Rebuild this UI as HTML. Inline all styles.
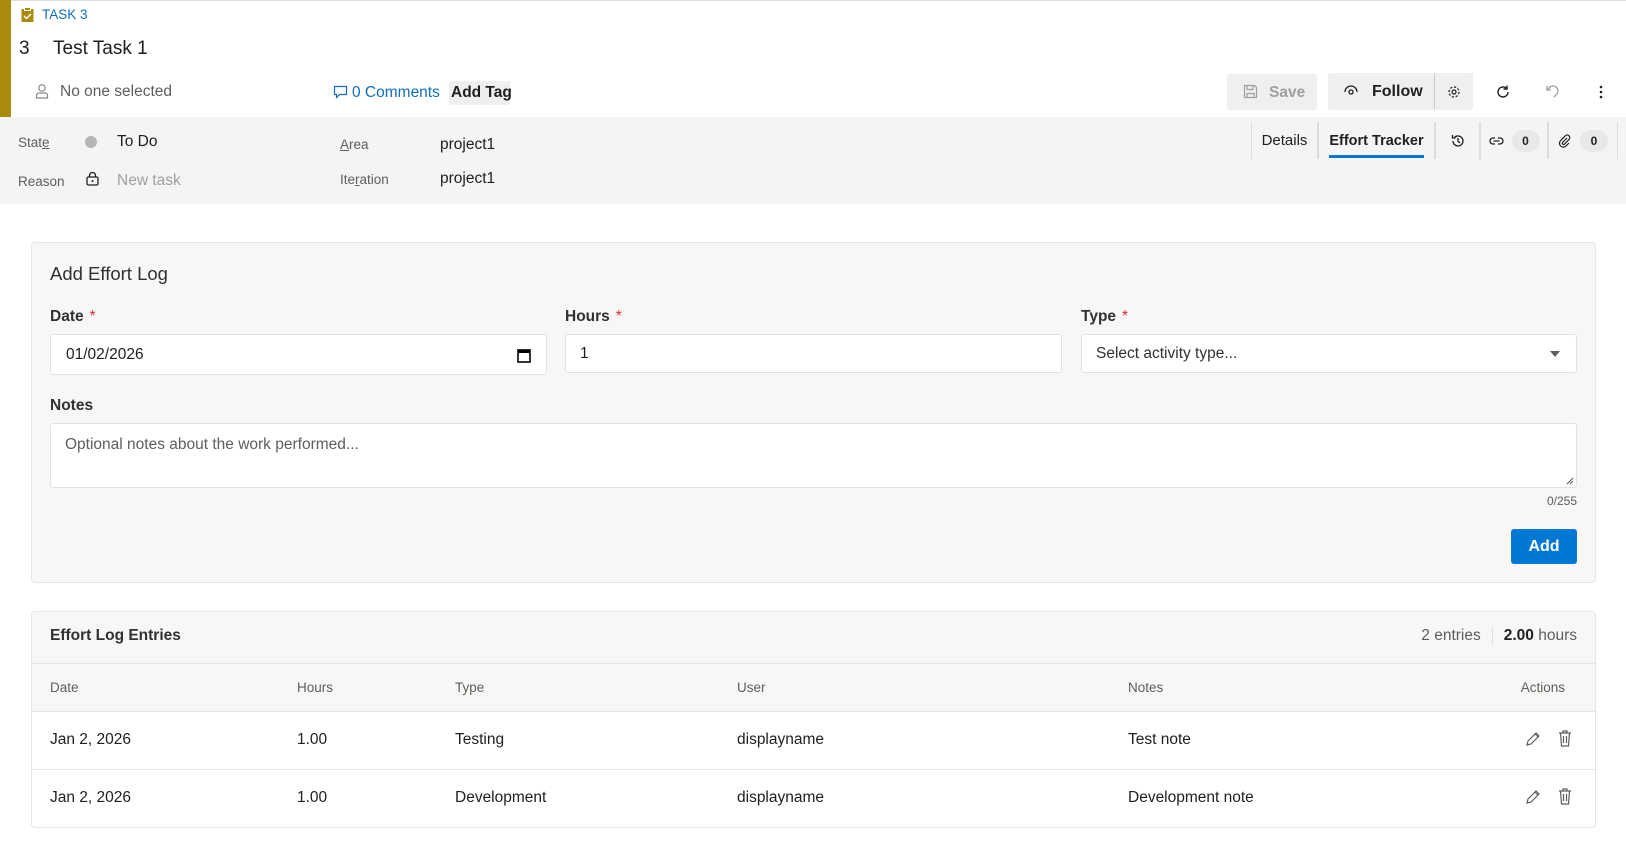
<!DOCTYPE html>
<html><head><meta charset="utf-8"><style>
*{box-sizing:border-box;margin:0;padding:0}
body{width:1626px;height:867px;overflow:hidden;background:#fff;font-family:"Liberation Sans",sans-serif;color:#201f1e;position:relative}
.a{position:absolute;white-space:nowrap}
.bar{position:absolute;left:0;top:0;width:11px;height:117px;background:#a88b0b}
.grey{position:absolute;left:0;top:117px;width:1626px;height:87px;background:#f4f4f4}
.lbl{font-size:13.5px;color:#605e5c}
.val{font-size:15.5px;color:#201f1e}
.btn{position:absolute;background:#efefef;border-radius:2px}
.tab{position:absolute;top:122px;height:37px;border-left:1px solid #dcdcdc;border-right:1px solid #dcdcdc;font-size:15px;display:flex;align-items:center;justify-content:center}
.card{position:absolute;left:31px;width:1565px;background:#f8f7f6;border:1px solid #e6e6e6;border-radius:4px}
.flbl{font-size:15.5px;font-weight:bold;color:#323130}
.star{color:#d13438;font-weight:normal;margin-left:6px}
.inp{position:absolute;height:40px;background:#fff;border:1px solid #e1e1e1;border-radius:3px;font-size:15.5px;display:flex;align-items:center;padding-left:14px}
.th{font-size:13.5px;color:#605e5c}
.td{font-size:15.5px}
.badge{display:inline-block;background:#e8e8e8;border-radius:12px;width:28px;height:22px;font-size:12px;line-height:22px;text-align:center;font-weight:bold}
</style></head><body>
<div style="position:absolute;left:0;top:0;width:1626px;height:1px;background:#e0e0e0"></div>
<div class="bar"></div>
<svg class="a" style="left:21px;top:7px" width="13" height="15" viewBox="0 0 13 15"><rect x="0.5" y="2" width="12" height="13" fill="#a88b0b"/><rect x="3.5" y="0.5" width="6" height="3" fill="#a88b0b" stroke="#fff" stroke-width="1"/><path d="M3 9l2.5 2.5L10 7" stroke="#fff" stroke-width="1.5" fill="none"/></svg>
<div class="a" style="left:42px;top:7px;font-size:13.5px;color:#106ebe">TASK 3</div>
<div class="a" style="left:19px;top:38px;font-size:19px">3</div>
<div class="a" style="left:53px;top:38px;font-size:19px">Test Task 1</div>
<svg class="a" style="left:35px;top:83px" width="14" height="16" viewBox="0 0 14 16"><circle cx="7" cy="5" r="3.2" fill="none" stroke="#8a8886" stroke-width="1.2"/><path d="M1.5 15v-2.5a2.5 2.5 0 0 1 2.5-2.5h6a2.5 2.5 0 0 1 2.5 2.5V15z" fill="none" stroke="#8a8886" stroke-width="1.2"/></svg>
<div class="a" style="left:60px;top:83px;font-size:15.5px;color:#605e5c">No one selected</div>
<svg class="a" style="left:333px;top:85px" width="15" height="15" viewBox="0 0 15 15"><path d="M1.5 1.5h12v8h-7l-3 3v-3h-2z" fill="none" stroke="#106ebe" stroke-width="1.2"/></svg>
<div class="a" style="left:352px;top:84px;font-size:15.5px;color:#106ebe">0 Comments</div>
<div class="a" style="left:449px;top:81px;width:61px;height:24px;background:#efefef;border-radius:2px;font-size:15.5px;font-weight:bold;padding:3px 2px">Add Tag</div>

<div class="btn" style="left:1227px;top:74px;width:90px;height:36px"></div>
<svg class="a" style="left:1243px;top:84px" width="15" height="15" viewBox="0 0 15 15"><path d="M1.5 1.5h10l2 2v10h-12z M4 1.5v4h6v-4 M4 13.5v-4h7v4" fill="none" stroke="#a19f9d" stroke-width="1.2"/></svg>
<div class="a" style="left:1269px;top:84px;font-size:15.5px;font-weight:bold;color:#a19f9d">Save</div>
<div class="btn" style="left:1328px;top:73px;width:106px;height:37px"></div>
<div class="a" style="left:1434px;top:73px;width:1px;height:37px;background:#ccc"></div>
<div class="btn" style="left:1435px;top:73px;width:38px;height:37px"></div>
<svg class="a" style="left:1344px;top:85px" width="14" height="10" viewBox="0 0 14 10"><path d="M1 7a6 6 0 0 1 12 0" fill="none" stroke="#201f1e" stroke-width="1.3"/><circle cx="7" cy="7" r="2" fill="none" stroke="#201f1e" stroke-width="1.3"/></svg>
<div class="a" style="left:1372px;top:83px;font-size:16px;font-weight:bold">Follow</div>
<svg class="a" style="left:1447px;top:85px" width="14" height="14" viewBox="0 0 14 14"><circle cx="7" cy="7" r="2" fill="none" stroke="#201f1e" stroke-width="1.2"/><circle cx="7" cy="7" r="5" fill="none" stroke="#201f1e" stroke-width="1.2" stroke-dasharray="2.2 1.7"/></svg>
<svg class="a" style="left:1495px;top:84px" width="16" height="16" viewBox="0 0 16 16"><path d="M13 8a5 5 0 1 1-1.5-3.6" fill="none" stroke="#201f1e" stroke-width="1.4"/><path d="M12 1.5v3.5h-3.5" fill="none" stroke="#201f1e" stroke-width="1.4"/></svg>
<svg class="a" style="left:1545px;top:84px" width="16" height="16" viewBox="0 0 16 16"><path d="M2 2v4h4 M2 6l3-3a5 5 0 0 1 7 7l-3 3" fill="none" stroke="#a19f9d" stroke-width="1.3"/></svg>
<svg class="a" style="left:1598px;top:84px" width="6" height="16" viewBox="0 0 6 16"><circle cx="3" cy="3" r="1.3" fill="#201f1e"/><circle cx="3" cy="8" r="1.3" fill="#201f1e"/><circle cx="3" cy="13" r="1.3" fill="#201f1e"/></svg>

<div class="grey"></div>
<div class="a lbl" style="left:18px;top:135px">Stat<u>e</u></div>
<div class="a" style="left:85px;top:136px;width:12px;height:12px;border-radius:50%;background:#b5b5b5"></div>
<div class="a val" style="left:117px;top:133px">To Do</div>
<div class="a lbl" style="left:18px;top:174px">Reason</div>
<svg class="a" style="left:86px;top:172px" width="13" height="14" viewBox="0 0 13 14"><rect x="1" y="5" width="11" height="8" rx="1.5" fill="none" stroke="#201f1e" stroke-width="1.3"/><path d="M3.5 5V3.5a3 3 0 0 1 6 0V5" fill="none" stroke="#201f1e" stroke-width="1.3"/><circle cx="6.5" cy="9" r="1" fill="#201f1e"/></svg>
<div class="a val" style="left:117px;top:172px;color:#a19f9d">New task</div>
<div class="a lbl" style="left:340px;top:137px"><u>A</u>rea</div>
<div class="a val" style="left:440px;top:136px">project1</div>
<div class="a lbl" style="left:340px;top:172px">Ite<u>r</u>ation</div>
<div class="a val" style="left:440px;top:170px">project1</div>

<div class="tab" style="left:1251px;width:67px">Details</div>
<div class="tab" style="left:1318px;width:117px;font-weight:bold;font-size:14.5px">Effort Tracker<div style="position:absolute;left:10px;right:10px;bottom:1px;height:3px;background:#0078d4"></div></div>
<div class="tab" style="left:1435px;width:45px"><svg width="16" height="16" viewBox="0 0 16 16"><path d="M3 8a5 5 0 1 0 1.5-3.6 M2.5 2v3h3 M8 5v3.3l2 1.5" fill="none" stroke="#201f1e" stroke-width="1.3"/></svg></div>
<div class="tab" style="left:1480px;width:68px;gap:8px"><svg width="15" height="10" viewBox="0 0 15 10"><path d="M6 2H4a3 3 0 0 0 0 6h2 M9 2h2a3 3 0 0 1 0 6H9 M4.5 5h6" fill="none" stroke="#201f1e" stroke-width="1.3"/></svg><span class="badge">0</span></div>
<div class="tab" style="left:1548px;width:70px;gap:8px"><svg width="14" height="14" viewBox="0 0 14 14"><path d="M9 4L4.5 8.5a1.3 1.3 0 0 0 1.8 1.8L11 5.5a2.6 2.6 0 0 0-3.7-3.7L2.6 6.6a3.8 3.8 0 0 0 5.4 5.4l3-3" fill="none" stroke="#201f1e" stroke-width="1.2"/></svg><span class="badge">0</span></div>

<div class="card" style="top:242px;height:341px"></div>
<div class="a" style="left:50px;top:263px;font-size:18.5px;color:#323130">Add Effort Log</div>
<div class="a flbl" style="left:50px;top:308px">Date<span class="star">*</span></div>
<div class="a flbl" style="left:565px;top:308px">Hours<span class="star">*</span></div>
<div class="a flbl" style="left:1081px;top:308px">Type<span class="star">*</span></div>
<div class="inp" style="left:50px;top:334px;width:497px;height:41px;padding-left:15px">01/02/2026<svg style="position:absolute;right:15px;top:13px" width="14" height="15" viewBox="0 0 14 15"><rect x="1" y="2" width="12" height="12" fill="none" stroke="#000" stroke-width="1.6"/><rect x="1" y="2" width="12" height="3" fill="#000"/></svg></div>
<div class="inp" style="left:565px;top:334px;width:497px;height:39px">1</div>
<div class="inp" style="left:1081px;top:334px;width:496px;height:39px;color:#323130">Select activity type...<svg style="position:absolute;right:16px;top:16px" width="10" height="6" viewBox="0 0 10 6"><path d="M0 0h10L5 6z" fill="#605e5c"/></svg></div>
<div class="a flbl" style="left:50px;top:397px">Notes</div>
<div class="inp" style="left:50px;top:423px;width:1527px;height:65px;align-items:flex-start;padding-top:12px;color:#605e5c">Optional notes about the work performed...<svg style="position:absolute;right:2px;bottom:2px" width="8" height="8" viewBox="0 0 8 8"><path d="M7 1L1 7M7 4L4 7" stroke="#555" stroke-width="1"/></svg></div>
<div class="a" style="right:49px;top:494px;font-size:12px;color:#605e5c">0/255</div>
<div class="a" style="left:1511px;top:529px;width:66px;height:35px;background:#0078d4;border-radius:3px;color:#fff;font-weight:bold;font-size:16px;text-align:center;line-height:35px">Add</div>

<div class="card" style="top:611px;height:217px;background:#fff;overflow:hidden">
 <div style="position:absolute;left:0;top:0;width:100%;height:99px;background:#f8f7f6"></div>
 <div style="position:absolute;left:0;top:51px;width:100%;height:1px;background:#e6e6e6"></div>
 <div style="position:absolute;left:0;top:99px;width:100%;height:1px;background:#e6e6e6"></div>
 <div style="position:absolute;left:0;top:157px;width:100%;height:1px;background:#e6e6e6"></div>
</div>
<div class="a" style="left:50px;top:627px;font-size:15.5px;font-weight:bold;color:#323130">Effort Log Entries</div>
<div class="a" style="right:49px;top:627px;font-size:15.5px;color:#605e5c">2 entries<span style="display:inline-block;width:1px;height:18px;background:#ddd;margin:0 11px;vertical-align:middle"></span><b style="color:#201f1e">2.00</b> hours</div>
<div class="a th" style="left:50px;top:680px">Date</div>
<div class="a th" style="left:297px;top:680px">Hours</div>
<div class="a th" style="left:455px;top:680px">Type</div>
<div class="a th" style="left:737px;top:680px">User</div>
<div class="a th" style="left:1128px;top:680px">Notes</div>
<div class="a th" style="right:61px;top:680px">Actions</div>

<div class="a td" style="left:50px;top:731px">Jan 2, 2026</div>
<div class="a td" style="left:297px;top:731px">1.00</div>
<div class="a td" style="left:455px;top:731px">Testing</div>
<div class="a td" style="left:737px;top:731px">displayname</div>
<div class="a td" style="left:1128px;top:731px">Test note</div>
<div class="a td" style="left:50px;top:789px">Jan 2, 2026</div>
<div class="a td" style="left:297px;top:789px">1.00</div>
<div class="a td" style="left:455px;top:789px">Development</div>
<div class="a td" style="left:737px;top:789px">displayname</div>
<div class="a td" style="left:1128px;top:789px">Development note</div>

<svg class="a" style="left:1525px;top:731px" width="16" height="16" viewBox="0 0 16 16"><path d="M2 14l1-4 8-8 3 3-8 8z M10 3l3 3" fill="none" stroke="#605e5c" stroke-width="1.2"/></svg>
<svg class="a" style="left:1558px;top:730px" width="14" height="17" viewBox="0 0 14 17"><path d="M1 3h12 M5 3V1h4v2 M2.5 3l1 13h7l1-13 M5.5 6v7 M8.5 6v7" fill="none" stroke="#605e5c" stroke-width="1.2"/></svg>
<svg class="a" style="left:1525px;top:789px" width="16" height="16" viewBox="0 0 16 16"><path d="M2 14l1-4 8-8 3 3-8 8z M10 3l3 3" fill="none" stroke="#605e5c" stroke-width="1.2"/></svg>
<svg class="a" style="left:1558px;top:788px" width="14" height="17" viewBox="0 0 14 17"><path d="M1 3h12 M5 3V1h4v2 M2.5 3l1 13h7l1-13 M5.5 6v7 M8.5 6v7" fill="none" stroke="#605e5c" stroke-width="1.2"/></svg>
</body></html>
